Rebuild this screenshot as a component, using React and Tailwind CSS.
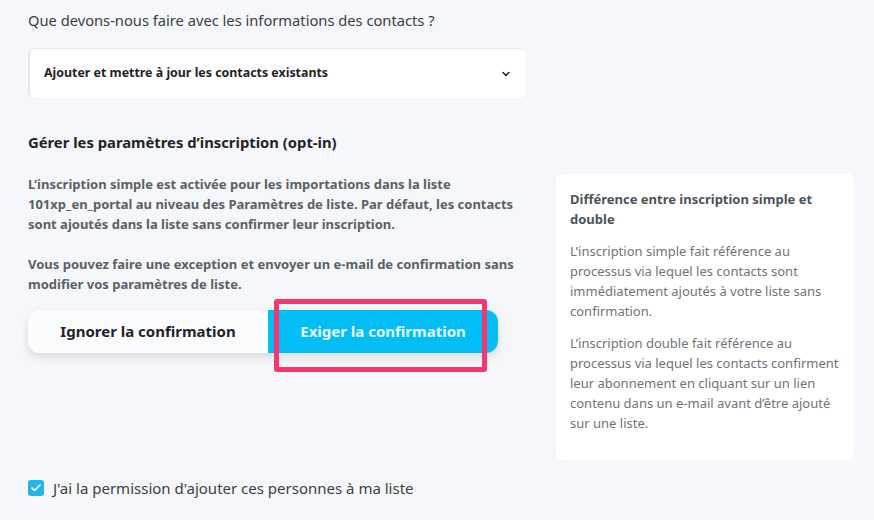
import React, { useState } from 'react';
import { ChevronDown, Check } from 'lucide-react';

export default function App() {
  const [checked, setChecked] = useState(true);

  return (
    <div className="min-h-screen w-[874px] h-[520px] overflow-hidden bg-[#f5f7fa] font-['Noto_Sans',sans-serif]">
      <div className="flex gap-[31px] pl-[28px] pr-[20px]">
        {/* Left column */}
        <div className="w-[497px] shrink-0">
          <p className="pt-[10px] text-[14.7px] leading-[20px] text-[#3b3f45]">
            Que devons-nous faire avec les informations des contacts ?
          </p>

          <div className="mt-[18px] h-[50px] bg-white rounded-md border-l-2 border-t border-[#e4e7eb] flex items-center justify-between pl-[14px] pr-[13px]">
            <span className="text-[12.4px] font-bold text-[#1f2329]">Ajouter et mettre à jour les contacts existants</span>
            <ChevronDown size={12} strokeWidth={3} className="text-[#1f2329]" />
          </div>

          <h2 className="mt-[34px] text-[14.8px] leading-[20px] font-bold text-[#1f2329]">
            Gérer les paramètres d’inscription (opt-in)
          </h2>

          <div className="mt-[22px] text-[13px] leading-[20px] font-bold text-[#5b6067]">
            <p>
              L’inscription simple est activée pour les importations dans la liste 101xp_en_portal au niveau des Paramètres de liste. Par défaut, les contacts sont ajoutés dans la liste sans confirmer leur inscription.
            </p>
            <p className="mt-[20px]">
              Vous pouvez faire une exception et envoyer un e-mail de confirmation sans modifier vos paramètres de liste.
            </p>
          </div>

          <div className="relative mt-[16px] flex w-[470px] h-[43px] rounded-[12px] shadow-[0_4px_10px_rgba(0,0,0,0.12)]">
            <button className="w-[240px] h-full bg-[#fbfcfd] rounded-l-[12px] text-[15px] font-bold text-[#1f2329]">
              Ignorer la confirmation
            </button>
            <button className="flex-1 h-full bg-[#02bef5] rounded-r-[12px] text-[15px] font-bold text-[#e6f8fe]">
              Exiger la confirmation
            </button>
            <div className="absolute left-[246px] top-[-11px] w-[213px] h-[73px] border-[5px] border-[#f5366f] rounded-[3px] pointer-events-none" />
          </div>
        </div>

        {/* Right card */}
        <div className="mt-[174px] w-[298px] h-[286px] bg-white rounded-md px-[14px] pt-[15px]">
          <h3 className="text-[13px] leading-[20px] font-bold text-[#4b525a]">
            Différence entre inscription simple et double
          </h3>
          <p className="mt-[12px] text-[13px] leading-[20px] text-[#6f747a]">
            L’inscription simple fait référence au processus via lequel les contacts sont immédiatement ajoutés à votre liste sans confirmation.
          </p>
          <p className="mt-[12px] text-[13px] leading-[20px] text-[#6f747a]">
            L’inscription double fait référence au processus via lequel les contacts confirment leur abonnement en cliquant sur un lien contenu dans un e-mail avant d’être ajouté sur une liste.
          </p>
        </div>
      </div>

      <label className="mt-[18px] ml-[28px] flex items-center h-[20px] gap-[9px] cursor-pointer w-max">
        <span
          onClick={() => setChecked(!checked)}
          className={`w-[16px] h-[16px] rounded-[3px] flex items-center justify-center ${checked ? 'bg-[#1fb6e9]' : 'bg-white border border-gray-400'}`}
        >
          {checked && <Check size={12} strokeWidth={3.5} className="text-white" />}
        </span>
        <span className="text-[15px] leading-[20px] text-[#3b3f45]">J'ai la permission d'ajouter ces personnes à ma liste</span>
      </label>
    </div>
  );
}
